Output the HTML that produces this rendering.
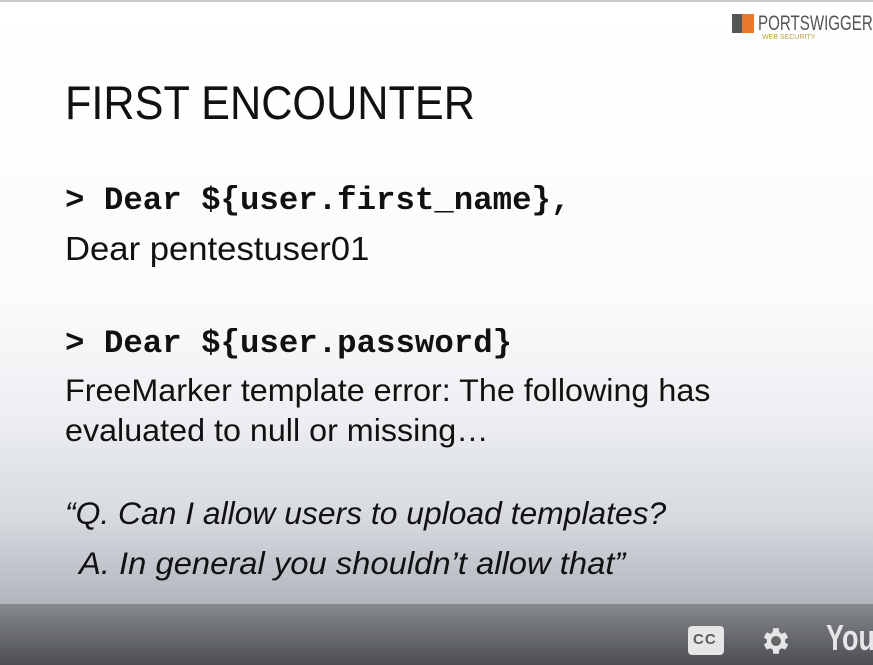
<!DOCTYPE html>
<html><head><meta charset="utf-8"><style>
html,body{margin:0;padding:0}
body{width:873px;height:665px;position:relative;overflow:hidden;font-family:"Liberation Sans",sans-serif;color:#111;
background:linear-gradient(to bottom,#ffffff 0px,#fbfbfc 300px,#eceef1 420px,#d6d9de 520px,#b4b8c0 597px);}
.t{position:absolute;white-space:nowrap;line-height:1}
.m{font-family:"Liberation Mono",monospace;font-weight:bold}
.bar{position:absolute;left:0;top:597px;width:873px;height:7px;background:#b3b6bb}
.ctrl{position:absolute;left:0;top:604px;width:873px;height:61px;background:linear-gradient(#86898e,#4c4e52)}
</style></head><body>
<div style="position:absolute;left:0;top:0;width:873px;height:2px;background:#c8c8c8"></div>
<div style="position:absolute;left:732px;top:14px;width:10px;height:19px;background:#555"></div>
<div style="position:absolute;left:742px;top:14px;width:12px;height:19px;background:#e8782a"></div>
<div class="t" style="left:758px;top:13px;font-size:21px;color:#555;transform:scaleX(0.72);transform-origin:left">PORTSWIGGER</div>
<div class="t" style="left:762px;top:34px;font-size:7px;color:#b8a040">WEB SECURITY</div>

<div class="t" style="left:65px;top:79px;font-size:47px;transform:scaleX(0.92);transform-origin:left">FIRST ENCOUNTER</div>

<div class="t m" style="left:65px;top:185px;font-size:32.4px">&gt; Dear ${user.first_name},</div>
<div class="t" style="left:65px;top:232px;font-size:33px;transform:scaleX(1.05);transform-origin:left">Dear pentestuser01</div>

<div class="t m" style="left:65px;top:328px;font-size:32.4px">&gt; Dear ${user.password}</div>
<div class="t" style="left:65px;top:375px;font-size:31.5px;transform:scaleX(1.025);transform-origin:left">FreeMarker template error: The following has</div>
<div class="t" style="left:65px;top:415px;font-size:31.5px;transform:scaleX(1.025);transform-origin:left">evaluated to null or missing…</div>

<div class="t" style="left:65px;top:498px;font-size:31.5px;font-style:italic;transform:scaleX(1.01);transform-origin:left">“Q. Can I allow users to upload templates?</div>
<div class="t" style="left:79px;top:548px;font-size:31.5px;font-style:italic;transform:scaleX(1.04);transform-origin:left">A. In general you shouldn’t allow that”</div>

<div class="bar"></div>
<div class="ctrl"></div>
<div style="position:absolute;left:688px;top:626px;width:36px;height:29px;background:#e6e6e6;border-radius:4px"></div>
<div class="t" style="left:693px;top:632px;font-size:15px;font-weight:bold;color:#5a5c60;letter-spacing:1px">CC</div>
<svg style="position:absolute;left:759px;top:624px" width="34" height="34" viewBox="0 0 24 24">
<path fill="#e6e6e6" d="M19.4 13a7.5 7.5 0 0 0 0-2l2.1-1.6-2-3.5-2.5 1a7.4 7.4 0 0 0-1.7-1L15 3h-4l-.4 2.9a7.4 7.4 0 0 0-1.7 1l-2.5-1-2 3.5L6.6 11a7.5 7.5 0 0 0 0 2l-2.1 1.6 2 3.5 2.5-1a7.4 7.4 0 0 0 1.7 1L11 21h4l.4-2.9a7.4 7.4 0 0 0 1.7-1l2.5 1 2-3.5zM13 15.5a3.5 3.5 0 1 1 0-7 3.5 3.5 0 0 1 0 7z" transform="translate(-1 0)"/>
</svg>
<div class="t" style="left:826px;top:620px;font-size:36px;font-weight:bold;color:#e6e6e6;transform:scaleX(0.75);transform-origin:left">You</div>
</body></html>
